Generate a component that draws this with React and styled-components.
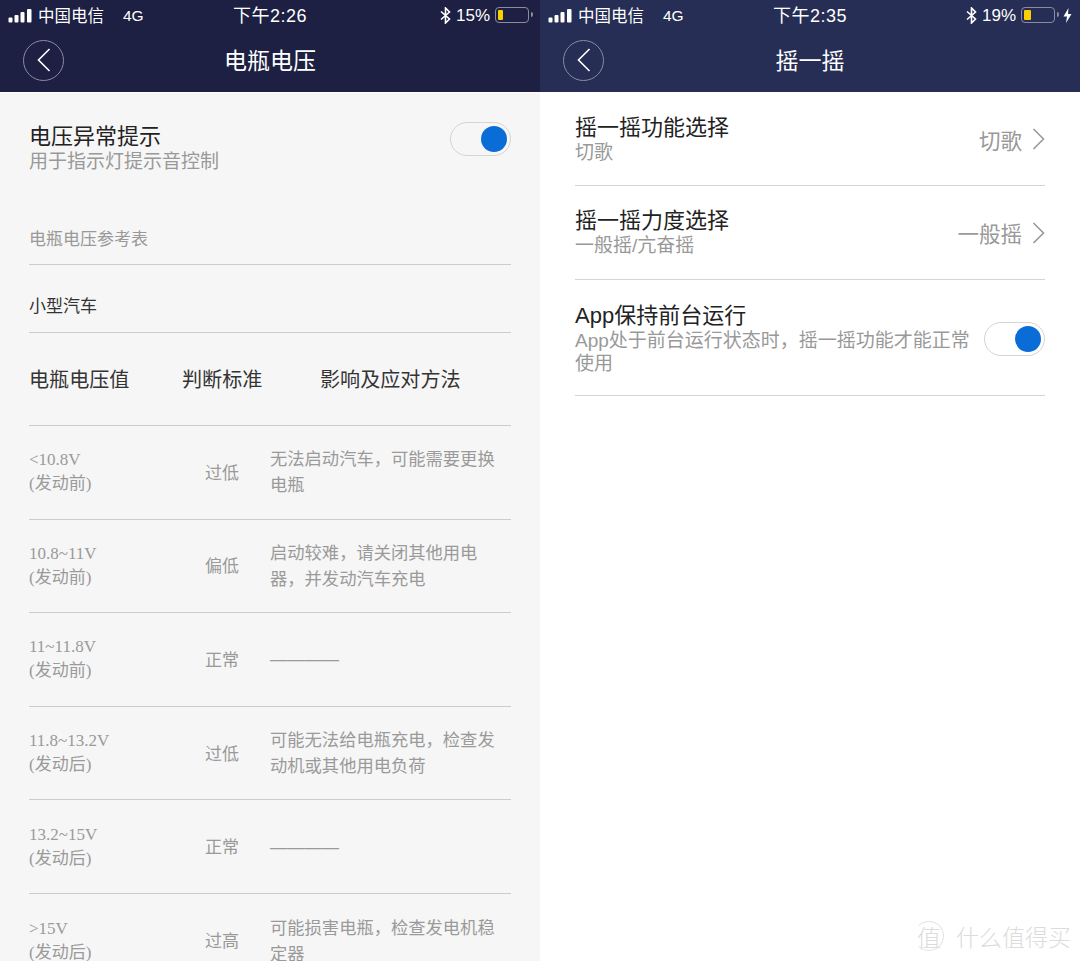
import styled, { createGlobalStyle } from "styled-components";

const cjk = `"Liberation Sans", "Noto Sans CJK SC", sans-serif`;
const serif = `"Liberation Serif", "Noto Sans CJK SC", serif`;

const GlobalStyle = createGlobalStyle`
  html, body {
    margin: 0;
    padding: 0;
    background: #fff;
    font-family: ${cjk};
  }
`;

const Page = styled.div`
  display: flex;
  width: 1080px;
  height: 961px;
  overflow: hidden;
  position: relative;
`;

const Phone = styled.section`
  width: 540px;
  height: 961px;
  overflow: hidden;
  background: ${(p) => p.$bg};
`;

const Header = styled.header`
  height: 92px;
  background: ${(p) => p.$bg};
  color: #fff;
  border-bottom: 1px solid #fdfdfd;
  box-sizing: content-box;
`;

const StatusBar = styled.div`
  display: grid;
  grid-template-columns: 1fr auto 1fr;
  align-items: center;
  height: 30px;
  padding: 0 8px;
`;

const StatusLeft = styled.div`
  display: flex;
  align-items: center;
  font-size: 16.5px;
`;

const Carrier = styled.span`
  margin-left: 6px;
`;

const Network = styled.span`
  margin-left: 19px;
  margin-top: 2px;
  font-size: 15.5px;
`;

const Time = styled.div`
  font-size: 18px;
  letter-spacing: 0.5px;
  margin-bottom: 3px;
`;

const StatusRight = styled.div`
  display: flex;
  align-items: center;
  justify-content: flex-end;
  gap: 5px;
  font-size: 17px;
  span {
    margin-top: 1px;
  }
`;

const BatteryBox = styled.div`
  position: relative;
  width: 34px;
  height: 16px;
  box-sizing: border-box;
  border: 1.5px solid #8b8d9f;
  border-radius: 4px;
  padding: 2px;
  margin-right: 3px;
  &::after {
    content: "";
    position: absolute;
    right: -5px;
    top: 4px;
    width: 2px;
    height: 5px;
    border-radius: 0 2px 2px 0;
    background: #8b8d9f;
  }
`;

const BatteryLevel = styled.div`
  height: 100%;
  background: #fcd000;
  border-radius: 1px;
`;

const NavRow = styled.div`
  display: grid;
  grid-template-columns: 1fr auto 1fr;
  align-items: center;
  height: 62px;
  padding: 0 23px;
`;

const BackButton = styled.div`
  width: 41px;
  height: 41px;
  box-sizing: border-box;
  border: 1px solid #8a8ca0;
  border-radius: 50%;
  display: flex;
  align-items: center;
  justify-content: center;
  margin-top: -2px;
`;

const NavTitle = styled.h1`
  margin: -4px 0 0;
  font-size: 23px;
  font-weight: 400;
`;

const LeftBody = styled.div`
  padding: 0 29px;
`;

const SwitchRow = styled.div`
  display: flex;
  justify-content: space-between;
  align-items: flex-start;
  padding-top: 31px;
  height: 107px;
  box-sizing: border-box;
`;

const Title = styled.div`
  font-size: 22px;
  line-height: 26px;
  color: #222;
`;

const Sub = styled.div`
  font-size: 19px;
  line-height: 23px;
  color: #999;
`;

const Toggle = styled.div`
  flex: none;
  width: 61px;
  height: 34px;
  margin-top: ${(p) => p.$mt}px;
  box-sizing: border-box;
  border: 1px solid #d4d4d4;
  border-radius: 17px;
  background: ${(p) => p.$bg};
  display: flex;
  align-items: center;
  justify-content: flex-end;
  padding-right: 3px;
  &::after {
    content: "";
    width: 26px;
    height: 26px;
    border-radius: 50%;
    background: #0a6cd6;
  }
`;

const Caption = styled.div`
  height: 65px;
  box-sizing: border-box;
  border-bottom: 1.5px solid #ccc;
  padding-top: 28px;
  font-size: 17px;
  line-height: 24px;
  color: #999;
`;

const CarType = styled.div`
  height: 68px;
  box-sizing: border-box;
  border-bottom: 1.5px solid #ccc;
  padding-top: 30px;
  font-size: 17px;
  line-height: 24px;
  color: #333;
`;

const TableHead = styled.div`
  height: 93px;
  box-sizing: border-box;
  border-bottom: 1.5px solid #ccc;
  padding-top: 33px;
  display: grid;
  grid-template-columns: 153px 138px 1fr;
  font-size: 20.1px;
  line-height: 28px;
  color: #333;
`;

const Row = styled.div`
  height: 93.6px;
  box-sizing: border-box;
  border-bottom: ${(p) => (p.$last ? "none" : "1.5px solid #ccc")};
  display: grid;
  grid-template-columns: 176px 65px 1fr;
  align-items: center;
  color: #999;
`;

const Range = styled.div`
  font-family: ${serif};
  font-size: 17px;
  line-height: 24px;
  color: #9a9a9a;
`;

const Level = styled.div`
  font-size: 17px;
  margin-top: -2px;
`;

const Advice = styled.div`
  font-size: 17.3px;
  line-height: 26px;
  color: #9a9a9a;
`;

const RightBody = styled.div`
  padding: 0 35px;
`;

const SettingRow = styled.div`
  height: ${(p) => p.$h}px;
  box-sizing: border-box;
  border-bottom: 1.5px solid #d4d4d4;
  display: flex;
  align-items: ${(p) => (p.$top ? "flex-start" : "center")};
  justify-content: space-between;
  padding-top: ${(p) => (p.$top ? "23px" : "0")};
`;

const SettingText = styled.div`
  width: 400px;
`;

const ValueBox = styled.div`
  display: flex;
  align-items: center;
  gap: 10px;
  font-size: 21.5px;
  color: #999;
  white-space: nowrap;
`;

const Watermark = styled.div`
  position: absolute;
  right: 9px;
  bottom: 8px;
  display: flex;
  align-items: center;
  gap: 12px;
  color: #dcdcdc;
  font-size: 23px;
  font-weight: 300;
`;

const WatermarkBadge = styled.span`
  width: 28px;
  height: 28px;
  display: flex;
  align-items: center;
  justify-content: center;
  border: 1px solid #e2e2e2;
  border-left-color: transparent;
  border-radius: 50%;
  font-size: 24px;
`;

function Signal() {
  return (
    <svg width="24" height="15" viewBox="0 0 24 15">
      <rect x="0.5" y="9.5" width="4" height="5" rx="1" fill="#fff" />
      <rect x="6.5" y="7" width="4" height="7.5" rx="1" fill="#fff" />
      <rect x="12.5" y="4" width="4" height="10.5" rx="1" fill="#fff" />
      <rect x="19" y="1" width="4.5" height="13.5" rx="1" fill="#fff" />
    </svg>
  );
}

function Bluetooth() {
  return (
    <svg width="11" height="17" viewBox="0 0 11 17" fill="none" stroke="#fff" strokeWidth="1.6">
      <path d="M1 4.5 L9.5 12 L5.5 16 V1 L9.5 5 L1 12.5" />
    </svg>
  );
}

function Bolt() {
  return (
    <svg width="9" height="15" viewBox="0 0 9 15">
      <path d="M5.5 0 L0.5 8.5 H4 L3 15 L8.5 6 H5 Z" fill="#fff" />
    </svg>
  );
}

function BackArrow() {
  return (
    <svg width="16" height="24" viewBox="0 0 16 24" fill="none" stroke="#fff" strokeWidth="1.6">
      <path d="M13.5 1 L2.5 12 L13.5 23" />
    </svg>
  );
}

function Chevron() {
  return (
    <svg width="13" height="22" viewBox="0 0 13 22" fill="none" stroke="#999" strokeWidth="1.6">
      <path d="M1.5 1 L11.5 11 L1.5 21" />
    </svg>
  );
}

function PhoneHeader({ bg, time, percent, level, charging, title }) {
  return (
    <Header $bg={bg}>
      <StatusBar>
        <StatusLeft>
          <Signal />
          <Carrier>中国电信</Carrier>
          <Network>4G</Network>
        </StatusLeft>
        <Time>{time}</Time>
        <StatusRight>
          <Bluetooth />
          <span>{percent}</span>
          <BatteryBox>
            <BatteryLevel style={{ width: level }} />
          </BatteryBox>
          {charging && <Bolt />}
        </StatusRight>
      </StatusBar>
      <NavRow>
        <BackButton>
          <BackArrow />
        </BackButton>
        <NavTitle>{title}</NavTitle>
      </NavRow>
    </Header>
  );
}

const rows = [
  ["<10.8V", "(发动前)", "过低", "无法启动汽车，可能需要更换电瓶"],
  ["10.8~11V", "(发动前)", "偏低", "启动较难，请关闭其他用电器，并发动汽车充电"],
  ["11~11.8V", "(发动前)", "正常", "————"],
  ["11.8~13.2V", "(发动后)", "过低", "可能无法给电瓶充电，检查发动机或其他用电负荷"],
  ["13.2~15V", "(发动后)", "正常", "————"],
  [">15V", "(发动后)", "过高", "可能损害电瓶，检查发电机稳定器"],
];

export default function App() {
  return (
    <Page>
      <GlobalStyle />
      <Phone $bg="#f6f6f6">
        <PhoneHeader bg="#1d2042" time="下午2:26" percent="15%" level="5px" title="电瓶电压" />
        <LeftBody>
          <SwitchRow>
            <div>
              <Title>电压异常提示</Title>
              <Sub>用于指示灯提示音控制</Sub>
            </div>
            <Toggle $bg="#f6f6f6" $mt={-2} />
          </SwitchRow>
          <Caption>电瓶电压参考表</Caption>
          <CarType>小型汽车</CarType>
          <TableHead>
            <span>电瓶电压值</span>
            <span>判断标准</span>
            <span>影响及应对方法</span>
          </TableHead>
          {rows.map((r, i) => (
            <Row key={r[0]} $last={i === rows.length - 1}>
              <Range>
                {r[0]}
                <br />
                {r[1]}
              </Range>
              <Level>{r[2]}</Level>
              <Advice>{r[3]}</Advice>
            </Row>
          ))}
        </LeftBody>
      </Phone>
      <Phone $bg="#fff">
        <PhoneHeader bg="#272e55" time="下午2:35" percent="19%" level="7px" charging title="摇一摇" />
        <RightBody>
          <SettingRow $h={93}>
            <SettingText>
              <Title>摇一摇功能选择</Title>
              <Sub>切歌</Sub>
            </SettingText>
            <ValueBox>
              切歌
              <Chevron />
            </ValueBox>
          </SettingRow>
          <SettingRow $h={94}>
            <SettingText>
              <Title>摇一摇力度选择</Title>
              <Sub>一般摇/亢奋摇</Sub>
            </SettingText>
            <ValueBox>
              一般摇
              <Chevron />
            </ValueBox>
          </SettingRow>
          <SettingRow $h={116} $top>
            <SettingText>
              <Title>App保持前台运行</Title>
              <Sub>App处于前台运行状态时，摇一摇功能才能正常使用</Sub>
            </SettingText>
            <Toggle $bg="#fff" $mt={19} />
          </SettingRow>
        </RightBody>
      </Phone>
      <Watermark>
        <WatermarkBadge>值</WatermarkBadge>
        <span>什么值得买</span>
      </Watermark>
    </Page>
  );
}
